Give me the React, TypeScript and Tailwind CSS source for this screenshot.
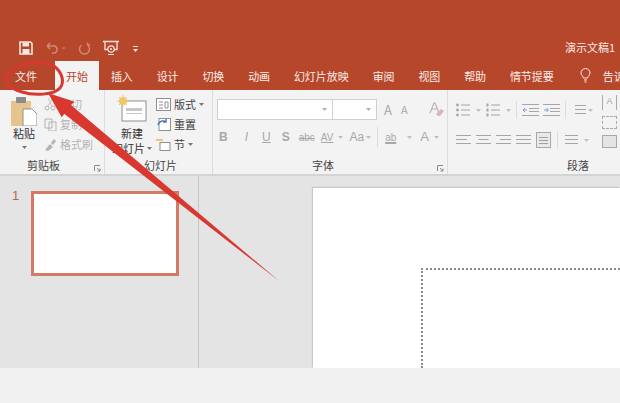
import type { ReactNode } from 'react'

const tabs = ['插入', '设计', '切换', '动画', '幻灯片放映', '审阅', '视图', '帮助', '情节提要']

function Caret({ className = '' }: { className?: string }) {
  return (
    <svg width="5" height="3" viewBox="0 0 5 3" className={'shrink-0 ' + className}>
      <path d="M0 0h5L2.5 3z" fill="currentColor" />
    </svg>
  )
}

function Lines({ widths, align = 'center' }: { widths: number[]; align?: 'left' | 'center' | 'right' }) {
  return (
    <svg width="15" height="12" viewBox="0 0 15 12" className="shrink-0 text-[#a6a6a6]">
      {widths.map((w, i) => (
        <rect
          key={i}
          x={align === 'left' ? 0 : align === 'right' ? 15 - w : (15 - w) / 2}
          y={i * 4 + 1}
          width={w}
          height="1"
          fill="currentColor"
        />
      ))}
    </svg>
  )
}

function ListIcon({ numbered }: { numbered?: boolean }) {
  return (
    <svg width="14" height="14" viewBox="0 0 14 14" className="shrink-0 text-[#a6a6a6]">
      {[2, 7, 12].map(y => (
        <g key={y}>
          {numbered ? <rect x="0.500" y={y - 1.5} width="2" height="3" fill="currentColor" /> : <circle cx="1.500" cy={y} r="1.400" fill="currentColor" />}
          <rect x="5" y={y - 0.5} width="9" height="1" fill="currentColor" />
        </g>
      ))}
    </svg>
  )
}

function IndentIcon({ flip }: { flip?: boolean }) {
  return (
    <svg width="17" height="12" viewBox="0 0 17 12" className="shrink-0 text-[#a6a6a6]">
      <path d="M0 .5h17M7 4.500h10M7 7.500h10M0 11.500h17" stroke="currentColor" />
      <path d={flip ? 'M1 6h4M3.500 4l2 2-2 2' : 'M1 6h4M3 4L1 6l2 2'} fill="none" stroke="#7f9cc0" />
    </svg>
  )
}

function GroupTitle({ children, launcher, className = '' }: { children: ReactNode; launcher?: boolean; className?: string }) {
  return (
    <div className={'absolute bottom-0 left-0 right-0 flex h-[18px] items-center justify-center text-[11px] text-[#444] ' + className}>
      {children}
      {launcher && (
        <svg width="7" height="7" viewBox="0 0 7 7" className="absolute right-[3px] bottom-[2px] text-[#8a8a8a]">
          <path d="M.5 6V.5H6M3 3l3 3M6 3.500V6H3.500" fill="none" stroke="currentColor" />
        </svg>
      )}
    </div>
  )
}

function SaveIcon() {
  return (
    <svg width="14" height="14" viewBox="0 0 14 14" className="text-[#f6e6e1]">
      <path d="M1 1h10.500L13 2.500V13H1z" fill="none" stroke="currentColor" strokeWidth="1.600" />
      <rect x="3.500" y="1.500" width="6.500" height="4" fill="currentColor" />
      <rect x="3.500" y="8" width="7" height="5" fill="currentColor" />
    </svg>
  )
}

export default function App() {
  return (
    <div className="relative flex h-[403px] w-[620px] flex-col overflow-hidden bg-[#f1f1f1] font-['Noto_Sans_CJK_SC',sans-serif]">
      {/* title bar */}
      <div className="flex h-[61px] items-end bg-[#b7472a] pb-[6px] pl-[19px] pr-[5px] text-[#f6e6e1]">
        <SaveIcon />
        <svg width="20" height="12" viewBox="0 0 20 12" className="ml-[13px] mb-[1px] text-[#d08b78]">
          <path d="M1 4h8a4 4 0 0 1 0 7H6M1 4l3-3M1 4l3 3" fill="none" stroke="currentColor" strokeWidth="1.500" />
          <path d="M16 6h3" stroke="currentColor" strokeWidth="1" />
        </svg>
        <svg width="13" height="13" viewBox="0 0 13 13" className="ml-[12px] text-[#d08b78]">
          <path d="M3.500 3a5 5 0 1 0 6 0M9.500 3V.5M9.500 3H12" fill="none" stroke="currentColor" strokeWidth="1.400" />
        </svg>
        <svg width="16" height="15" viewBox="0 0 16 15" className="ml-[12px] text-[#f6e6e1]">
          <path d="M0 1.500h16M2 1.500v8h12v-8" fill="none" stroke="currentColor" strokeWidth="1.300" />
          <circle cx="8" cy="9" r="3.200" fill="#b7472a" stroke="currentColor" strokeWidth="1.200" />
          <circle cx="8" cy="9" r="1" fill="currentColor" />
          <path d="M5 14.500h6" stroke="currentColor" />
        </svg>
        <div className="ml-[14px] mb-[3px] flex flex-col items-center gap-[2px]">
          <div className="h-px w-[5px] bg-[#f6e6e1]" />
          <Caret />
        </div>
        <span className="ml-auto text-[11px] leading-[16px] text-[#f8ece8]">演示文稿1</span>
      </div>

      {/* tabs */}
      <div className="flex h-[29px] shrink-0 items-stretch bg-[#b7472a] pl-[3px] text-[11px] leading-[31px] whitespace-nowrap text-[#fbeeea]">
        <div className="shrink-0 px-[12px]">文件</div>
        <div className="ml-[6px] shrink-0 bg-[#f3f3f3] px-[11px] text-[#b7472a]">开始</div>
        <div className="flex shrink-0">
          {tabs.map(t => (
            <div key={t} className="shrink-0 px-[11.875px]">{t}</div>
          ))}
        </div>
        <svg width="11" height="15" viewBox="0 0 11 15" className="ml-[14px] mt-[7px] shrink-0">
          <path d="M3.500 10C3 8 1 7 1 5a4.500 4.500 0 0 1 9 0c0 2-2 3-2.500 5zM4 12h3M4.500 14h2" fill="none" stroke="#fbeeea" strokeWidth="1" />
        </svg>
        <div className="ml-[12px] shrink-0">告诉</div>
      </div>

      {/* ribbon */}
      <div className="flex h-[86px] shrink-0 border-b-2 border-[#d4d4d4] bg-[#f3f3f3]">
        {/* clipboard */}
        <div className="relative flex w-[105px] shrink-0 border-r border-[#dcdcdc] pl-[11px] pt-[6px]">
          <div className="flex w-[26px] flex-col items-center">
            <svg width="26" height="30" viewBox="0 0 26 30">
              <rect x="0" y="5" width="20" height="25" fill="#e6c48c" />
              <rect x="5" y="1" width="10" height="6" rx="1" fill="#8b8b8b" />
              <path d="M12 13h9l5 5v12H12z" fill="#fff" stroke="#8f8f8f" />
            </svg>
            <span className="text-[11px] leading-[15px] text-[#333]">粘贴</span>
            <Caret className="mt-[5px] text-[#777]" />
          </div>
          <div className="ml-[7px] flex flex-col gap-[3px] text-[11px] leading-[17px] text-[#b3b3b3]">
            <div className="flex items-center gap-[3px]">
              <svg width="13" height="13" viewBox="0 0 13 13"><circle cx="3" cy="10" r="2" fill="none" stroke="#b3b3b3" /><circle cx="9" cy="10" r="2" fill="none" stroke="#b3b3b3" /><path d="M4 8l5-8M8 8L4 0" stroke="#c4c4c4" /></svg>
              剪切
            </div>
            <div className="flex items-center gap-[3px]">
              <svg width="13" height="13" viewBox="0 0 13 13"><path d="M1 1h7v9H1zM5 4h7v9H5z" fill="#f3f3f3" stroke="#b3b3b3" /></svg>
              复制
              <Caret />
            </div>
            <div className="flex items-center gap-[3px]">
              <svg width="13" height="13" viewBox="0 0 13 13"><path d="M1 12l5-6 3 3-5 4zM7 5l3-4 2 2-3 4z" fill="#b3b3b3" /></svg>
              格式刷
            </div>
          </div>
          <GroupTitle launcher className="pr-[17px]">剪贴板</GroupTitle>
        </div>

        {/* slides */}
        <div className="relative flex w-[108px] shrink-0 border-r border-[#dcdcdc] pl-[7px] pt-[5px]">
          <div className="flex w-[40px] flex-col items-center">
            <svg width="30" height="27" viewBox="0 0 30 27">
              <rect x="5" y="6" width="24" height="20" fill="#fff" stroke="#8f8f8f" />
              <rect x="9" y="13" width="16" height="3" fill="#c8c8c8" />
              <rect x="9" y="18" width="16" height="1" fill="#c8c8c8" />
              <circle cx="6" cy="6" r="4" fill="#eec76b" />
              <path d="M6 0v12M0 6h12M2 2l8 8M10 2l-8 8" stroke="#eec76b" />
            </svg>
            <span className="mt-[4px] text-[11px] leading-[15px] text-[#333]">新建</span>
            <span className="flex items-center gap-[2px] whitespace-nowrap text-[11px] leading-[14px] text-[#333]">幻灯片<Caret className="text-[#777]" /></span>
          </div>
          <div className="ml-[4px] flex flex-col gap-[2px] text-[11px] leading-[18px] text-[#444]">
            <div className="flex items-center gap-[3px]">
              <svg width="15" height="13" viewBox="0 0 15 13"><rect x=".5" y=".5" width="14" height="12" fill="#fff" stroke="#8f8f8f" /><path d="M3 4h4M3 7h4M3 10h4M9 4h3v6H9z" stroke="#8f8f8f" fill="none" /></svg>
              版式<Caret className="text-[#777]" />
            </div>
            <div className="flex items-center gap-[3px]">
              <svg width="15" height="13" viewBox="0 0 15 13"><rect x="3" y=".5" width="11.500" height="12" fill="#fff" stroke="#8f8f8f" /><path d="M2 7a5 5 0 0 1 8-3M10 1v3H7" fill="none" stroke="#3d79b8" strokeWidth="1.400" /></svg>
              重置
            </div>
            <div className="flex items-center gap-[3px]">
              <svg width="15" height="13" viewBox="0 0 15 13"><rect x="4" y="4.500" width="10" height="8" fill="#fff" stroke="#8f8f8f" /><path d="M0 2h7" stroke="#eec76b" strokeWidth="2" /></svg>
              节<Caret className="text-[#777]" />
            </div>
          </div>
          <GroupTitle className="pl-[4px]">幻灯片</GroupTitle>
        </div>

        {/* font */}
        <div className="relative w-[235px] shrink-0 border-r border-[#dcdcdc] pl-[4px] pt-[9px]">
          <div className="flex items-center">
            <div className="flex h-[21px] w-[116px] items-center justify-end border border-[#d0d0d0] bg-white pr-[5px] text-[#b0b0b0]"><Caret /></div>
            <div className="flex h-[21px] w-[44px] items-center justify-end border border-l-0 border-[#d0d0d0] bg-white pr-[5px] text-[#b0b0b0]"><Caret /></div>
            <span className="ml-[7px] text-[13px] leading-[21px] text-[#a8a8a8]">A</span>
            <span className="ml-[9px] text-[11px] leading-[21px] text-[#a8a8a8]">A</span>
            <svg width="16" height="15" viewBox="0 0 16 15" className="ml-[21px]">
              <path d="M1 11L5 1h1l4 10M3 7h5" fill="none" stroke="#b5b5b5" strokeWidth="1.200" />
              <path d="M7 12l5-5 3 2-4 5H9z" fill="#d8b4c4" />
            </svg>
          </div>
          <div className="mt-[7px] flex h-[20px] items-center pl-[2px] font-['Liberation_Sans',sans-serif] text-[12px] text-[#a8a8a8]">
            <span className="font-bold">B</span>
            <span className="ml-[17px] italic">I</span>
            <span className="ml-[14px] underline">U</span>
            <span className="ml-[11px] font-bold">S</span>
            <span className="ml-[9px] text-[10px] line-through">abc</span>
            <span className="ml-[6px] text-[10px] underline">AV</span>
            <Caret className="ml-[5px] text-[#c0c0c0]" />
            <span className="ml-[6px]">Aa</span>
            <Caret className="ml-[2px] text-[#c0c0c0]" />
            <div className="ml-[6px] h-[20px] w-px bg-[#dcdcdc]" />
            <span className="ml-[7px] text-[10px] underline decoration-2">ab</span>
            <Caret className="ml-[11px] text-[#c0c0c0]" />
            <span className="ml-[8px] text-[13px]">A</span>
            <Caret className="ml-[5px] text-[#c0c0c0]" />
          </div>
          <GroupTitle launcher className="pr-[14px]">字体</GroupTitle>
        </div>

        {/* paragraph */}
        <div className="relative flex min-w-0 flex-1 overflow-hidden pl-[8px] pt-[11px]">
          <div className="w-[146px] shrink-0">
            <div className="flex h-[18px] items-center">
              <ListIcon />
              <Caret className="ml-[6px] text-[#c0c0c0]" />
              <div className="ml-[5px]"><ListIcon numbered /></div>
              <Caret className="ml-[6px] text-[#c0c0c0]" />
              <div className="ml-[5px] h-[18px] w-px bg-[#dcdcdc]" />
              <div className="ml-[5px]"><IndentIcon /></div>
              <div className="ml-[4px]"><IndentIcon flip /></div>
              <div className="ml-[5px] h-[18px] w-px bg-[#dcdcdc]" />
              <div className="ml-[5px]"><Lines widths={[11, 11, 11]} align="right" /></div>
              <Caret className="ml-[2px] text-[#c0c0c0]" />
            </div>
            <div className="mt-[12px] flex h-[18px] items-center gap-[5px]">
              <Lines widths={[15, 11, 15]} align="left" />
              <Lines widths={[15, 10, 15]} />
              <Lines widths={[15, 11, 15]} align="right" />
              <Lines widths={[15, 15, 15]} />
              <div className="flex h-[16px] w-[15px] shrink-0 flex-col justify-center gap-[2px] border border-[#a8a8a8] bg-[#e9e9e9] px-[2px]">
                <div className="h-px bg-[#a0a0a0]" />
                <div className="h-px bg-[#a0a0a0]" />
                <div className="h-px bg-[#a0a0a0]" />
              </div>
              <div className="mx-[1px] h-[18px] w-px bg-[#dcdcdc]" />
              <Lines widths={[13, 13, 13]} />
              <Caret className="text-[#c0c0c0]" />
            </div>
          </div>
          <div className="-mt-[6px] flex w-[15px] shrink-0 flex-col gap-[6px]">
            <div className="h-[15px] border-x border-[#a8a8a8] text-center font-['Liberation_Sans',sans-serif] text-[9px] leading-[12px] text-[#a8a8a8]">A</div>
            <div className="h-[13px] border border-dashed border-[#a8a8a8]" />
            <div className="h-[13px] border border-[#a8a8a8] bg-[#e4e4e4]" />
          </div>
          <GroupTitle className="justify-start pl-[119px]">段落</GroupTitle>
        </div>
      </div>

      {/* workspace */}
      <div className="flex h-[192px] shrink-0 bg-[#e4e4e4]">
        <div className="flex w-[199px] shrink-0 border-r border-[#c6c6c6] pl-[12px] pt-[12px]">
          <span className="font-['Liberation_Sans',sans-serif] text-[13px] leading-[15px] text-[#b7694f]">1</span>
          <div className="ml-[12px] mt-[3px] h-[85px] w-[148px] border-[3px] border-[#d27a64] bg-white" />
        </div>
        <div className="flex min-w-0 flex-1 pl-[114px] pt-[12px]">
          <div className="flex-1 bg-white pl-[108px] pt-[80px] shadow-[-1px_-1px_1px_#c8c8c8]">
            <div className="h-full border-l-2 border-t-2 border-dotted border-[#8c8c8c]" />
          </div>
        </div>
      </div>

      {/* annotation */}
      <svg width="620" height="403" viewBox="0 0 620 403" className="pointer-events-none absolute inset-0">
        <path d="M17 67C28 61 46 62 54 66 62 72 65 82 60 88 54 95 34 96 22 92 10 89 3 82 7 75 9 71 13 69 17 67z" fill="none" stroke="#d8382f" strokeWidth="3" />
        <path d="M279 281L58 109l7-9z" fill="#d8382f" />
        <path d="M48 93l26 8.600-12.300 15.600z" fill="#d8382f" />
      </svg>
    </div>
  )
}
